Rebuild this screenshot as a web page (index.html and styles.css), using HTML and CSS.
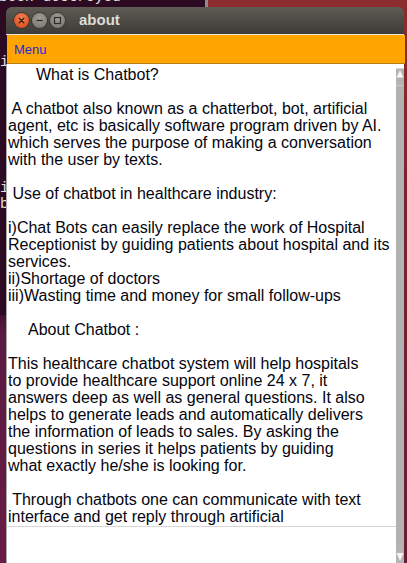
FILE: index.html
```html
<!DOCTYPE html>
<html>
<head>
<meta charset="utf-8">
<link rel="stylesheet" href="styles.css">
</head>
<body>
<div class="desktop">
  <div class="terminal">
    <div class="term-line first">been destroyed</div>
    <div class="term-glyph g1">i</div>
    <div class="term-glyph g2">i</div>
    <div class="term-glyph g3">b</div>
  </div>
  <div class="window">
    <div class="titlebar">
      <span class="wbtn close"><svg width="15" height="15" viewBox="0 0 15 15"><path d="M5.2 5.2 L9.8 9.8 M9.8 5.2 L5.2 9.8" stroke="#3a1a10" stroke-width="1.3" stroke-linecap="round"/></svg></span>
      <span class="wbtn"><svg width="15" height="15" viewBox="0 0 15 15"><path d="M4.5 7.5 H10.5" stroke="#2e2d2a" stroke-width="1.3"/></svg></span>
      <span class="wbtn"><svg width="15" height="15" viewBox="0 0 15 15"><rect x="4.5" y="4.5" width="6" height="6" fill="none" stroke="#2e2d2a" stroke-width="1.2"/></svg></span>
      <span class="title">about</span>
    </div>
    <div class="menubar"><span class="menu">Menu</span></div>
    <div class="body">
      <div class="text">
        <div class="line ind28">What is Chatbot?</div>
        <div class="line"> </div>
        <div class="line"> A chatbot also known as a chatterbot, bot, artificial</div>
        <div class="line">agent, etc is basically software program driven by AI.</div>
        <div class="line">which serves the purpose of making a conversation</div>
        <div class="line">with the user by texts.</div>
        <div class="line"> </div>
        <div class="line"> Use of chatbot in healthcare industry:</div>
        <div class="line"> </div>
        <div class="line">i)Chat Bots can easily replace the work of Hospital</div>
        <div class="line">Receptionist by guiding patients about hospital and its</div>
        <div class="line">services.</div>
        <div class="line">ii)Shortage of doctors</div>
        <div class="line">iii)Wasting time and money for small follow-ups</div>
        <div class="line"> </div>
        <div class="line ind20">About Chatbot :</div>
        <div class="line"> </div>
        <div class="line">This healthcare chatbot system will help hospitals</div>
        <div class="line">to provide healthcare support online 24 x 7, it</div>
        <div class="line">answers deep as well as general questions. It also</div>
        <div class="line">helps to generate leads and automatically delivers</div>
        <div class="line">the information of leads to sales. By asking the</div>
        <div class="line">questions in series it helps patients by guiding</div>
        <div class="line">what exactly he/she is looking for.</div>
        <div class="line"> </div>
        <div class="line"> Through chatbots one can communicate with text</div>
        <div class="line">interface and get reply through artificial</div>
        <div class="rule"></div>
      </div>
      <div class="scrollbar">
        <div class="sb-btn up"><svg width="8" height="10" viewBox="0 0 8 10"><path d="M4 1 L7.5 8.5 H0.5 Z" fill="#f4f4f4"/></svg></div>
        <div class="sb-track"></div>
        <div class="sb-btn down"><svg width="8" height="12" viewBox="0 0 8 12"><path d="M0.5 2 H7.5 L4 10 Z" fill="#f4f4f4"/></svg></div>
      </div>
    </div>
  </div>
</div>
</body>
</html>
```
FILE: styles.css
```css
html, body {
  margin: 0;
  padding: 0;
}
body {
  width: 407px;
  height: 563px;
  overflow: hidden;
}
.desktop {
  position: relative;
  width: 407px;
  height: 563px;
  overflow: hidden;
  background: linear-gradient(180deg, #8c2c2e 0%, #7a2232 40%, #6a1b34 100%);
}
.terminal {
  position: absolute;
  left: 0;
  top: -20px;
  width: 205px;
  height: 335px;
  background: #2c0a22;
  border-right: 3px solid #8f8a86;
  font-family: "Liberation Mono", "DejaVu Sans Mono", monospace;
  font-size: 14.5px;
  color: #e6e2de;
}
.desktop::before {
  content: "";
  position: absolute;
  left: 0;
  top: 300px;
  width: 10px;
  height: 263px;
  background: linear-gradient(180deg, #2c0a22 0%, #5a1a42 12%, #681c45 100%);
}
.term-line {
  position: absolute;
  left: -1px;
  white-space: pre;
  line-height: 17px;
}
.term-line.first {
  top: 9px;
}
.term-glyph {
  position: absolute;
  left: 0;
  line-height: 17px;
}
.g1 { top: 74px; }
.g2 { top: 200px; }
.g3 { top: 216px; }
.window {
  position: absolute;
  left: 6px;
  top: 7px;
  width: 398px;
  height: 556px;
  display: flex;
  flex-direction: column;
}
.titlebar {
  height: 27px;
  border-radius: 6px 6px 0 0;
  background: linear-gradient(180deg, #5f5c55 0%, #4d4b46 50%, #3c3b37 100%);
  border-bottom: 1px solid #ebe7de;
  display: flex;
  align-items: center;
  padding-left: 8px;
  gap: 3px;
}
.wbtn {
  width: 15px;
  height: 15px;
  border-radius: 50%;
  background: radial-gradient(circle at 50% 35%, #a29f97 0%, #86837c 60%, #6d6a63 100%);
  box-shadow: 0 0 0 1px #3a3935;
  display: flex;
  align-items: center;
  justify-content: center;
}
.wbtn.close {
  background: radial-gradient(circle at 50% 35%, #f58a5a 0%, #e2582b 60%, #c4441c 100%);
}
.wbtn svg {
  display: block;
}
.title {
  margin-left: 11px;
  font-family: "Liberation Sans", Arial, sans-serif;
  font-weight: bold;
  font-size: 15px;
  color: #dfdbd2;
  line-height: 27px;
  margin-top: -2px;
}
.menubar {
  height: 28px;
  margin-left: 1px;
  margin-right: -1px;
  background: #ffa500;
  border-bottom: 1px solid #b87d14;
  display: flex;
  align-items: center;
}
.menu {
  margin-left: 7px;
  font-family: "Liberation Sans", Arial, sans-serif;
  font-size: 13px;
  color: #2a2ad8;
}
.body {
  flex: 1;
  display: flex;
  background: #ffffff;
  border-left: 1px solid #a8a8a8;
  min-height: 0;
}
.text {
  flex: 1;
  padding: 2px 0 0 1px;
  font-family: "Liberation Sans", Arial, sans-serif;
  font-size: 16px;
  line-height: 17px;
  color: #05050f;
}
.line {
  white-space: pre;
  height: 17px;
}
.ind28 { padding-left: 28px; }
.ind20 { padding-left: 20px; }
.rule {
  margin-top: 1px;
  margin-left: -1px;
  height: 1px;
  background: #d6d6d6;
}
.scrollbar {
  width: 8px;
  padding-top: 4px;
  display: flex;
  flex-direction: column;
  background: #ffffff;
}
.sb-btn {
  background: #b4b4b4;
  display: flex;
  justify-content: center;
}
.sb-btn.up {
  height: 16px;
  align-items: flex-start;
  border-top: 1px solid #d8d8d8;
  border-bottom: 1px solid #c8c8c8;
}
.sb-btn.down {
  height: 16px;
  align-items: flex-end;
}
.sb-track {
  flex: 1;
  background: #b2b2b2;
}
```
